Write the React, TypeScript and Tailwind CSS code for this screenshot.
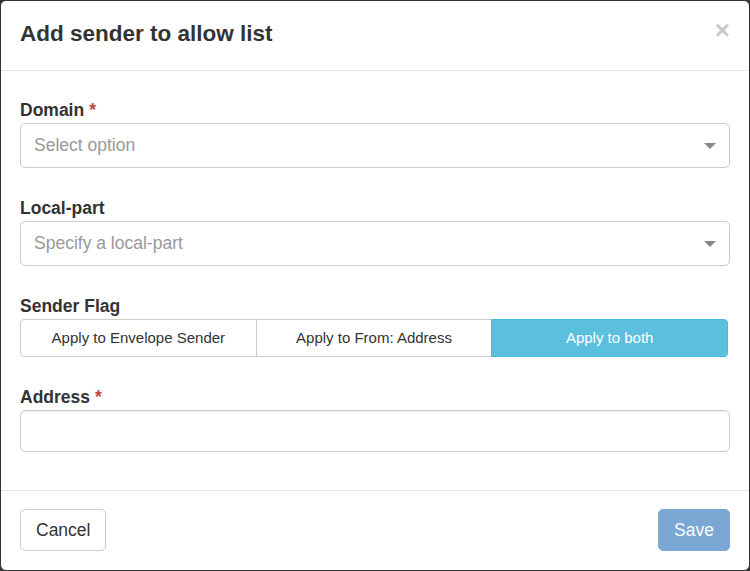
import React, { useState } from "react";

type Flag = "envelope" | "from" | "both";

const Label: React.FC<{ text: string; required?: boolean }> = ({ text, required }) => (
  <label className="block h-[25px] leading-[25px] text-[17.5px] font-bold text-[#333]">
    {text}
    {required && <span className="ml-[5px] text-[#b94a48]">*</span>}
  </label>
);

const SelectBox: React.FC<{ placeholder: string }> = ({ placeholder }) => (
  <div className="flex h-[45px] items-center justify-between rounded-[5px] border border-[#cccccc] bg-white pl-[13px] pr-[13px]">
    <span className="leading-[25px] text-[17.5px] text-[#999999]">{placeholder}</span>
    <span className="h-0 w-0 border-x-[6px] border-t-[6px] border-x-transparent border-t-[#888888]" />
  </div>
);

export default function App() {
  const [flag, setFlag] = useState<Flag>("both");

  const flags: { key: Flag; label: string }[] = [
    { key: "envelope", label: "Apply to Envelope Sender" },
    { key: "from", label: "Apply to From: Address" },
    { key: "both", label: "Apply to both" },
  ];

  return (
    <div className="h-[571px] w-[750px] bg-[#333333] font-['Liberation_Sans',Arial,sans-serif]">
      <div className="flex h-full w-full flex-col overflow-hidden rounded-[6px] border border-[#333333] bg-white">
        {/* header */}
        <div className="flex h-[70px] shrink-0 items-start justify-between border-b border-[#e5e5e5] px-[19px] pt-[17px]">
          <h4 className="text-[22.5px] font-bold leading-[32px] text-[#333]">Add sender to allow list</h4>
          <button className="-mt-[1px] text-[26px] font-bold leading-none text-[#c9c9c9]">×</button>
        </div>

        {/* body */}
        <div className="px-[19px] pt-[27px] pb-[38px]">
          <Label text="Domain" required />
          <SelectBox placeholder="Select option" />

          <div className="mt-[28px]">
            <Label text="Local-part" />
            <SelectBox placeholder="Specify a local-part" />
          </div>

          <div className="mt-[28px]">
            <Label text="Sender Flag" />
            <div className="flex h-[38px] w-[708px]">
              {flags.map((f, i) => {
                const active = flag === f.key;
                return (
                  <button
                    key={f.key}
                    onClick={() => setFlag(f.key)}
                    className={
                      "flex-1 border text-[15px] " +
                      (i === 0 ? "rounded-l-[4px] " : "-ml-px ") +
                      (i === flags.length - 1 ? "rounded-r-[4px] " : "") +
                      (active
                        ? "relative border-[#46b8da] bg-[#5bc0de] text-white"
                        : "border-[#cccccc] bg-white text-[#333]")
                    }
                  >
                    {f.label}
                  </button>
                );
              })}
            </div>
          </div>

          <div className="mt-[28px]">
            <Label text="Address" required />
            <input
              type="text"
              className="h-[42px] w-full rounded-[5px] border border-[#cccccc] px-[13px] text-[17.5px] text-[#555] shadow-[inset_0_1px_1px_rgba(0,0,0,0.075)] outline-none"
            />
          </div>
        </div>

        {/* footer */}
        <div className="flex justify-between border-t border-[#e5e5e5] px-[19px] pt-[18px]">
          <button className="h-[42px] rounded-[5px] border border-[#cccccc] bg-white px-[15px] text-[17.5px] text-[#333]">
            Cancel
          </button>
          <button
            disabled
            className="h-[42px] rounded-[5px] border border-[#7ea7ca] bg-[#7aa7d3] px-[15px] text-[17.5px] text-white"
          >
            Save
          </button>
        </div>
      </div>
    </div>
  );
}
